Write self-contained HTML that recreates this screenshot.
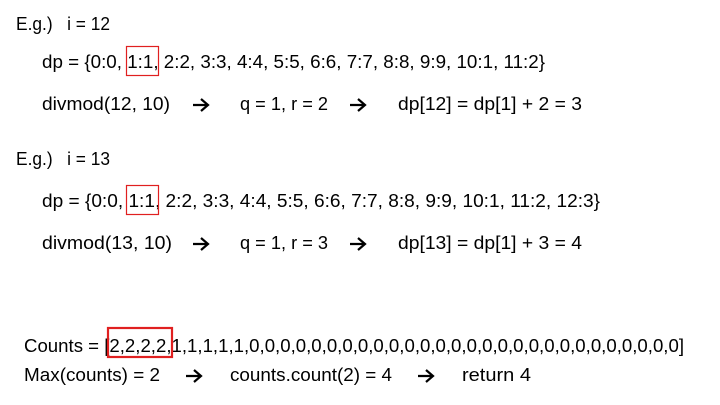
<!DOCTYPE html>
<html><head><meta charset="utf-8"><style>
html,body{margin:0;padding:0;background:#fff;width:720px;height:405px;overflow:hidden}
svg text{font-family:"Liberation Sans",sans-serif;font-size:18.5px;fill:#000}
</style></head><body>
<svg width="720" height="405" viewBox="0 0 720 405" xmlns="http://www.w3.org/2000/svg">
<defs>
<g id="ar"><path d="M0 0 H15 M8 -6 L15 0 L8 6" fill="none" stroke="#000" stroke-width="2.2"/></g>
</defs>
<text x="16" y="30" textLength="94" lengthAdjust="spacingAndGlyphs">E.g.)&#160;&#160;&#160;i = 12</text>
<text x="42" y="68" textLength="503" lengthAdjust="spacingAndGlyphs">dp = {0:0, 1:1, 2:2, 3:3, 4:4, 5:5, 6:6, 7:7, 8:8, 9:9, 10:1, 11:2}</text>
<rect x="126.5" y="46.5" width="32" height="29" fill="none" stroke="#e02020" stroke-width="1.2"/>
<text x="42" y="110" textLength="128" lengthAdjust="spacingAndGlyphs">divmod(12, 10)</text>
<use href="#ar" x="193" y="105"/>
<text x="240" y="110" textLength="88" lengthAdjust="spacingAndGlyphs">q = 1, r = 2</text>
<use href="#ar" x="350" y="105"/>
<text x="398" y="110" textLength="184" lengthAdjust="spacingAndGlyphs">dp[12] = dp[1] + 2 = 3</text>

<text x="16" y="165" textLength="94" lengthAdjust="spacingAndGlyphs">E.g.)&#160;&#160;&#160;i = 13</text>
<text x="42" y="207" textLength="558" lengthAdjust="spacingAndGlyphs">dp = {0:0, 1:1, 2:2, 3:3, 4:4, 5:5, 6:6, 7:7, 8:8, 9:9, 10:1, 11:2, 12:3}</text>
<rect x="126.5" y="185.5" width="32" height="29" fill="none" stroke="#e02020" stroke-width="1.2"/>
<text x="42" y="249" textLength="130" lengthAdjust="spacingAndGlyphs">divmod(13, 10)</text>
<use href="#ar" x="193" y="244"/>
<text x="240" y="249" textLength="88" lengthAdjust="spacingAndGlyphs">q = 1, r = 3</text>
<use href="#ar" x="350" y="244"/>
<text x="398" y="249" textLength="184" lengthAdjust="spacingAndGlyphs">dp[13] = dp[1] + 3 = 4</text>

<text x="24" y="352" textLength="660" lengthAdjust="spacingAndGlyphs">Counts = [2,2,2,2,1,1,1,1,1,0,0,0,0,0,0,0,0,0,0,0,0,0,0,0,0,0,0,0,0,0,0,0,0,0,0,0,0]</text>
<rect x="108" y="328" width="64" height="29" fill="none" stroke="#e02020" stroke-width="2.2"/>
<text x="24" y="381" textLength="136" lengthAdjust="spacingAndGlyphs">Max(counts) = 2</text>
<use href="#ar" x="186" y="376"/>
<text x="230" y="381" textLength="162" lengthAdjust="spacingAndGlyphs">counts.count(2) = 4</text>
<use href="#ar" x="418" y="376"/>
<text x="462" y="381" textLength="69" lengthAdjust="spacingAndGlyphs">return 4</text>
</svg>
</body></html>
